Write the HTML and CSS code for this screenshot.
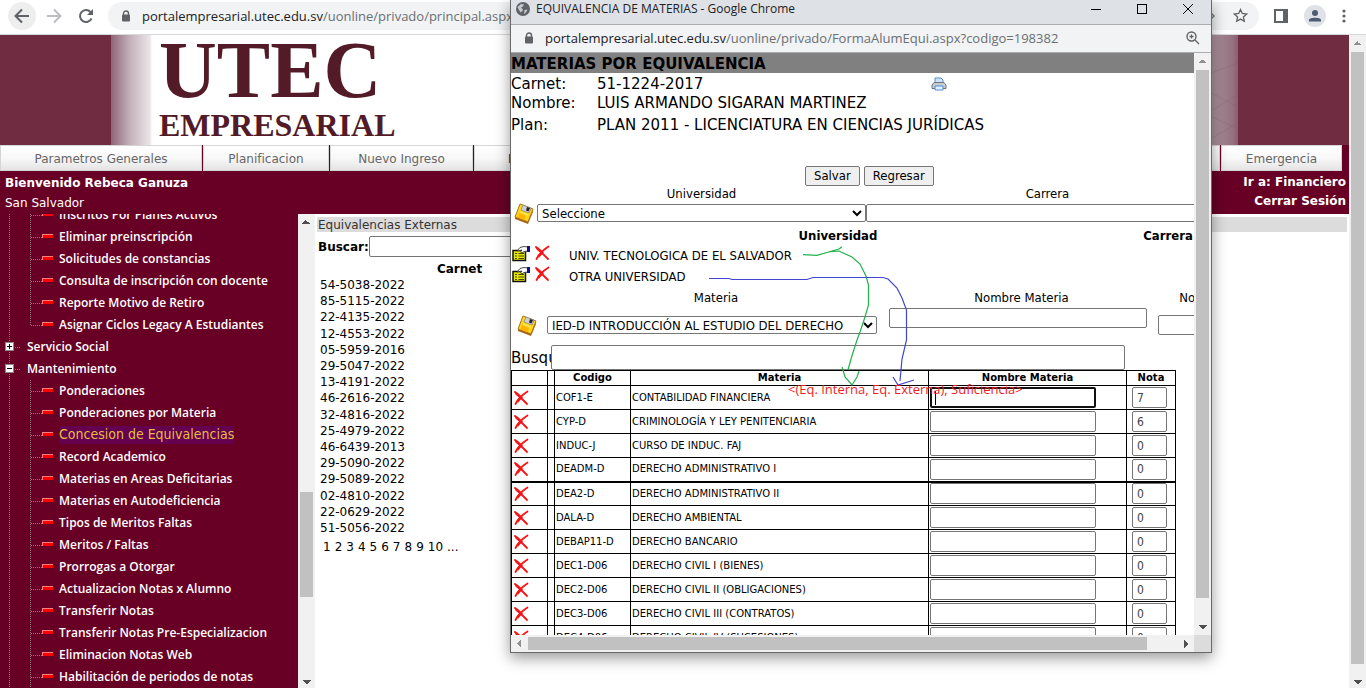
FILE: index.html
```html
<!DOCTYPE html>
<html lang="es">
<head>
<meta charset="utf-8">
<title>UTEC Empresarial</title>
<link rel="stylesheet" href="styles.css">
</head>
<body>
<svg class="defs" aria-hidden="true">
  <symbol id="disk" viewBox="0 0 20 21">
    <path d="M6 1 19 6 14 19 1 14Z" fill="#ffd51c" stroke="#a87510" stroke-width="1"/>
    <path d="M1 14 14 19 19 7V9L14 21 1 16Z" fill="#a8651a"/>
    <path d="M9 2 17 5 15 10 7 7Z" fill="#cfcfd6" stroke="#777" stroke-width=".6"/>
    <path d="M13 4 16 5 14.500 8.500 12 7.500Z" fill="#222"/>
    <path d="M5 10 12 13 10.500 17 3.500 14.500Z" fill="#ffb400"/>
    <path d="M6 9 14 12" stroke="#fff27a"/>
  </symbol>
  <symbol id="cross" viewBox="0 0 16 16">
    <path d="M2 2C5 5 9 9 14 14M14.500 1.500C9 5 5 9 2.500 14" fill="none" stroke="#f81414" stroke-width="1.800" stroke-linecap="round"/>
    <path d="M3 3 9 8.500M8 7.500 4 12" stroke="#f81414" stroke-width="2.600"/>
  </symbol>
  <symbol id="edit" viewBox="0 0 19 17">
    <path d="M1 5.500H13.500V15.500H1Z" fill="#e6e600" stroke="#111" stroke-width="1.500"/>
    <path d="M3 8.500H5M6.500 8.500H12M3 11H5M6.500 11H12M3 13.500H5M6.500 13.500H12" stroke="#444400"/>
    <path d="M5 6 8 2.500 12 1.500 16 2V6L12 6.500 10 8 8.500 7 10 5Z" fill="#fff" stroke="#333" stroke-width=".9"/>
    <path d="M15 1H18V7H15Z" fill="#10108a"/>
  </symbol>
  <symbol id="lock" viewBox="0 0 10 12">
    <path d="M2.500 5V3.500a2.500 2.500 0 0 1 5 0V5" fill="none" stroke="#5f6368" stroke-width="1.400"/>
    <rect x="1" y="4.500" width="8" height="7" rx="1" fill="#5f6368"/>
  </symbol>
</svg>

<header class="toolbar">
  <button class="nav-btn round" aria-label="Atrás"><svg width="16" height="16" viewBox="0 0 16 16"><path d="M15 8H2M8 1.500 1.500 8 8 14.500" fill="none" stroke="#5f6368" stroke-width="2"/></svg></button>
  <button class="nav-btn" aria-label="Adelante"><svg width="16" height="16" viewBox="0 0 16 16"><path d="M1 8H14M8 1.500 14.500 8 8 14.500" fill="none" stroke="#bcbec1" stroke-width="2"/></svg></button>
  <button class="nav-btn" aria-label="Recargar"><svg width="16" height="16" viewBox="0 0 16 16"><path d="M13.500 10.500A6 6 0 1 1 12.500 4L14 5.500" fill="none" stroke="#5f6368" stroke-width="2"/><path d="M15 1V7H9Z" fill="#5f6368"/></svg></button>
  <div class="omnibox">
    <svg width="10" height="12"><use href="#lock"/></svg>
    <span class="url"><b>portalempresarial.utec.edu.sv</b>/uonline/privado/principal.aspx</span>
    <svg width="14" height="14" viewBox="0 0 14 14"><path d="M1 2 6 7 1 12" fill="none" stroke="#777" stroke-width="1.400"/></svg>
    <svg width="15" height="15" viewBox="0 0 15 15"><path d="M7.500 1.500 9.300 5.500 13.700 6 10.400 9 11.300 13.300 7.500 11.100 3.700 13.300 4.600 9 1.300 6 5.700 5.500Z" fill="none" stroke="#5f6368" stroke-width="1.300"/></svg>
  </div>
  <div class="tools">
    <svg width="14" height="14" viewBox="0 0 14 14"><rect x="1" y="1" width="12" height="12" fill="none" stroke="#5f6368" stroke-width="2"/><path d="M9 0H14V14H9Z" fill="#5f6368"/></svg>
    <svg width="22" height="22" viewBox="0 0 22 22"><circle cx="11" cy="11" r="11" fill="#dee1e6"/><circle cx="11" cy="8" r="3" fill="#4d5b70"/><path d="M5 16.500V15C5 12 17 12 17 15V16.500Z" fill="#4d5b70"/></svg>
    <svg width="4" height="14" viewBox="0 0 4 14"><circle cx="2" cy="2" r="1.600" fill="#5f6368"/><circle cx="2" cy="7" r="1.600" fill="#5f6368"/><circle cx="2" cy="12" r="1.600" fill="#5f6368"/></svg>
  </div>
</header>

<div class="viewport">
  <div class="page">
    <div class="banner">
      <div class="block left"></div>
      <div class="fade-left"></div>
      <div class="logo"><span class="utec">UTEC</span><span class="emp">EMPRESARIAL</span></div>
      <svg class="fade-right" viewBox="0 0 98 110" preserveAspectRatio="none"><defs><linearGradient id="fr"><stop offset="0" stop-color="#fff"/><stop offset=".7" stop-color="#b09aa3"/><stop offset=".95" stop-color="#94707f"/><stop offset="1" stop-color="#8a5f70"/></linearGradient></defs><path d="M0 0H98V110H0Z" fill="url(#fr)"/><path d="M60 42 98 28M60 82 98 60M60 52 98 72M60 76 98 94M60 110 98 88" stroke="#7d5566" stroke-opacity=".2" fill="none"/></svg>
      <div class="block right"></div>
    </div>
    <nav class="tabs">
      <a class="w202" href="#">Parametros Generales</a>
      <a class="w126" href="#">Planificacion</a>
      <a class="w143" href="#">Nuevo Ingreso</a>
      <a class="wide" href="#">E</a>
      <a class="w121" href="#">Emergencia</a>
    </nav>
    <div class="userbar">
      <div><strong>Bienvenido Rebeca Ganuza</strong><span>San Salvador</span></div>
      <div class="right-col"><a href="#">Ir a: Financiero</a><a href="#">Cerrar Sesión</a></div>
    </div>
    <div class="columns">
      <nav class="side">
        <ul class="tree">
          <li class="leaf"><i class="v"></i><i class="h"></i><i class="dash"></i><a href="#">Inscritos Por Planes Activos</a></li>
          <li class="leaf"><i class="v"></i><i class="h"></i><i class="dash"></i><a href="#">Eliminar preinscripción</a></li>
          <li class="leaf"><i class="v"></i><i class="h"></i><i class="dash"></i><a href="#">Solicitudes de constancias</a></li>
          <li class="leaf"><i class="v"></i><i class="h"></i><i class="dash"></i><a href="#">Consulta de inscripción con docente</a></li>
          <li class="leaf"><i class="v"></i><i class="h"></i><i class="dash"></i><a href="#">Reporte Motivo de Retiro</a></li>
          <li class="leaf last"><i class="v"></i><i class="h"></i><i class="dash"></i><a href="#">Asignar Ciclos Legacy A Estudiantes</a></li>
          <li class="node"><i class="box plus"></i><i class="h"></i><a href="#">Servicio Social</a></li>
          <li class="node"><i class="box"></i><i class="h"></i><a href="#">Mantenimiento</a></li>
          <li class="leaf"><i class="v"></i><i class="h"></i><i class="dash"></i><a href="#">Ponderaciones</a></li>
          <li class="leaf"><i class="v"></i><i class="h"></i><i class="dash"></i><a href="#">Ponderaciones por Materia</a></li>
          <li class="leaf"><i class="v"></i><i class="h"></i><i class="dash"></i><a class="current" href="#">Concesion de Equivalencias</a></li>
          <li class="leaf"><i class="v"></i><i class="h"></i><i class="dash"></i><a href="#">Record Academico</a></li>
          <li class="leaf"><i class="v"></i><i class="h"></i><i class="dash"></i><a href="#">Materias en Areas Deficitarias</a></li>
          <li class="leaf"><i class="v"></i><i class="h"></i><i class="dash"></i><a href="#">Materias en Autodeficiencia</a></li>
          <li class="leaf"><i class="v"></i><i class="h"></i><i class="dash"></i><a href="#">Tipos de Meritos Faltas</a></li>
          <li class="leaf"><i class="v"></i><i class="h"></i><i class="dash"></i><a href="#">Meritos / Faltas</a></li>
          <li class="leaf"><i class="v"></i><i class="h"></i><i class="dash"></i><a href="#">Prorrogas a Otorgar</a></li>
          <li class="leaf"><i class="v"></i><i class="h"></i><i class="dash"></i><a href="#">Actualizacion Notas x Alumno</a></li>
          <li class="leaf"><i class="v"></i><i class="h"></i><i class="dash"></i><a href="#">Transferir Notas</a></li>
          <li class="leaf"><i class="v"></i><i class="h"></i><i class="dash"></i><a href="#">Transferir Notas Pre-Especializacion</a></li>
          <li class="leaf"><i class="v"></i><i class="h"></i><i class="dash"></i><a href="#">Eliminacion Notas Web</a></li>
          <li class="leaf"><i class="v"></i><i class="h"></i><i class="dash"></i><a href="#">Habilitación de periodos de notas</a></li>
        </ul>
      </nav>
      <div class="sbar side-bar"><i class="up"></i><i class="before"></i><i class="thumb"></i><i class="after"></i><i class="down"></i></div>
      <main class="content">
        <h2>Equivalencias Externas</h2>
        <div class="search"><label for="q">Buscar:</label><input id="q" type="text"></div>
        <table class="carnets">
          <thead><tr><th>Carnet</th></tr></thead>
          <tbody>
            <tr><td>54-5038-2022</td></tr><tr><td>85-5115-2022</td></tr><tr><td>22-4135-2022</td></tr><tr><td>12-4553-2022</td></tr>
            <tr><td>05-5959-2016</td></tr><tr><td>29-5047-2022</td></tr><tr><td>13-4191-2022</td></tr><tr><td>46-2616-2022</td></tr>
            <tr><td>32-4816-2022</td></tr><tr><td>25-4979-2022</td></tr><tr><td>46-6439-2013</td></tr><tr><td>29-5090-2022</td></tr>
            <tr><td>29-5089-2022</td></tr><tr><td>02-4810-2022</td></tr><tr><td>22-0629-2022</td></tr><tr><td>51-5056-2022</td></tr>
          </tbody>
        </table>
        <div class="pager"><span>1</span><a href="#">2</a><a href="#">3</a><a href="#">4</a><a href="#">5</a><a href="#">6</a><a href="#">7</a><a href="#">8</a><a href="#">9</a><a href="#">10</a><a href="#">...</a></div>
      </main>
    </div>
  </div>
  <div class="sbar page-bar"><i class="up dim"></i><i class="thumb"></i><i class="after"></i><i class="down"></i></div>
</div>

<section class="popup">
  <div class="titlebar">
    <svg width="14" height="14" viewBox="0 0 14 14"><circle cx="7" cy="7" r="7" fill="#5f6368"/><path d="M1.500 5 5 2 8 2.500 7 4.500 5 5.500 7 7.500 6.500 9 4.500 10.500 3 8ZM9.500 3.500 12 5.500M8.500 8 11.500 7.500 10 10.500 8 12Z" fill="#dee1e6" fill-opacity=".8"/></svg>
    <span>EQUIVALENCIA DE MATERIAS - Google Chrome</span>
    <div class="wincontrols">
      <button aria-label="Minimizar"><svg width="12" height="12"><path d="M1 6.500H11" stroke="#000"/></svg></button>
      <button aria-label="Maximizar"><svg width="12" height="12"><rect x="1.500" y="1.500" width="9" height="9" fill="none" stroke="#000"/></svg></button>
      <button aria-label="Cerrar"><svg width="12" height="12"><path d="M1 1 11 11M11 1 1 11" stroke="#000"/></svg></button>
    </div>
  </div>
  <div class="address">
    <svg width="10" height="12"><use href="#lock"/></svg>
    <span class="url"><b>portalempresarial.utec.edu.sv</b>/uonline/privado/FormaAlumEqui.aspx?codigo=198382</span>
    <svg width="14" height="14" viewBox="0 0 14 14"><circle cx="5.500" cy="5.500" r="4.500" fill="none" stroke="#5f6368" stroke-width="1.400"/><path d="M9 9 13 13M3.500 5.500H7.500M5.500 3.500V7.500" stroke="#5f6368" stroke-width="1.300"/></svg>
  </div>
  <div class="frame">
    <div class="doc">
      <h1>MATERIAS POR EQUIVALENCIA</h1>
      <div class="info">
        <span>Carnet:</span><span>51-1224-2017</span>
        <svg width="16" height="14" viewBox="0 0 16 14"><path d="M4 6V1H10L12 3V6" fill="#cfe4fb" stroke="#4f8fd0"/><path d="M1 8 3 5.500H13L15 8V11.500H1Z" fill="#c9ccd2" stroke="#6d7480"/><path d="M4 9H12V13H4Z" fill="#e4f0ff" stroke="#4f8fd0"/></svg>
        <span>Nombre:</span><span class="span2">LUIS ARMANDO SIGARAN MARTINEZ</span>
        <span>Plan:</span><span class="span2">PLAN 2011 - LICENCIATURA EN CIENCIAS JURÍDICAS</span>
      </div>
      <div class="actions"><button>Salvar</button><button>Regresar</button></div>
      <div class="uni-form">
        <span></span><label for="uni">Universidad</label><label for="car">Carrera</label>
        <svg width="20" height="21"><use href="#disk"/></svg>
        <select id="uni"><option>Seleccione</option></select>
        <select id="car"><option></option></select>
      </div>
      <table class="unis">
        <colgroup><col class="c-tools"><col class="c-uni"><col class="c-car"></colgroup>
        <thead><tr><th></th><th>Universidad</th><th>Carrera</th></tr></thead>
        <tbody>
          <tr><td><div class="icons"><svg width="19" height="17"><use href="#edit"/></svg><svg width="16" height="16"><use href="#cross"/></svg></div></td><td>UNIV. TECNOLOGICA DE EL SALVADOR</td><td></td></tr>
          <tr><td><div class="icons"><svg width="19" height="17"><use href="#edit"/></svg><svg width="16" height="16"><use href="#cross"/></svg></div></td><td>OTRA UNIVERSIDAD</td><td></td></tr>
        </tbody>
      </table>
      <div class="mat-form">
        <span></span><label for="mat">Materia</label><label for="nom">Nombre Materia</label><label for="not">Nota</label>
        <svg width="20" height="21"><use href="#disk"/></svg>
        <select id="mat"><option>IED-D INTRODUCCIÓN AL ESTUDIO DEL DERECHO</option></select>
        <input class="nom" id="nom" type="text">
        <input class="not" id="not" type="text">
      </div>
      <div class="find"><label for="busq">Busqueda</label><input id="busq" type="text"></div>
      <table class="grades">
        <colgroup><col class="g1"><col class="g2"><col class="g3"><col class="g4"><col class="g5"><col class="g6"></colgroup>
        <thead><tr><th></th><th></th><th>Codigo</th><th>Materia</th><th>Nombre Materia</th><th>Nota</th></tr></thead>
        <tbody>
          <tr><td><svg width="16" height="16"><use href="#cross"/></svg></td><td></td><td>COF1-E</td><td>CONTABILIDAD FINANCIERA</td><td><input class="name focus" aria-label="Nombre" type="text"></td><td><input class="grade" aria-label="Nota" value="7"></td></tr>
          <tr><td><svg width="16" height="16"><use href="#cross"/></svg></td><td></td><td>CYP-D</td><td>CRIMINOLOGÍA Y LEY PENITENCIARIA</td><td><input class="name" aria-label="Nombre" type="text"></td><td><input class="grade" aria-label="Nota" value="6"></td></tr>
          <tr><td><svg width="16" height="16"><use href="#cross"/></svg></td><td></td><td>INDUC-J</td><td>CURSO DE INDUC. FAJ</td><td><input class="name" aria-label="Nombre" type="text"></td><td><input class="grade" aria-label="Nota" value="0"></td></tr>
          <tr class="heavy"><td><svg width="16" height="16"><use href="#cross"/></svg></td><td></td><td>DEADM-D</td><td>DERECHO ADMINISTRATIVO I</td><td><input class="name" aria-label="Nombre" type="text"></td><td><input class="grade" aria-label="Nota" value="0"></td></tr>
          <tr><td><svg width="16" height="16"><use href="#cross"/></svg></td><td></td><td>DEA2-D</td><td>DERECHO ADMINISTRATIVO II</td><td><input class="name" aria-label="Nombre" type="text"></td><td><input class="grade" aria-label="Nota" value="0"></td></tr>
          <tr><td><svg width="16" height="16"><use href="#cross"/></svg></td><td></td><td>DALA-D</td><td>DERECHO AMBIENTAL</td><td><input class="name" aria-label="Nombre" type="text"></td><td><input class="grade" aria-label="Nota" value="0"></td></tr>
          <tr><td><svg width="16" height="16"><use href="#cross"/></svg></td><td></td><td>DEBAP11-D</td><td>DERECHO BANCARIO</td><td><input class="name" aria-label="Nombre" type="text"></td><td><input class="grade" aria-label="Nota" value="0"></td></tr>
          <tr><td><svg width="16" height="16"><use href="#cross"/></svg></td><td></td><td>DEC1-D06</td><td>DERECHO CIVIL I (BIENES)</td><td><input class="name" aria-label="Nombre" type="text"></td><td><input class="grade" aria-label="Nota" value="0"></td></tr>
          <tr><td><svg width="16" height="16"><use href="#cross"/></svg></td><td></td><td>DEC2-D06</td><td>DERECHO CIVIL II (OBLIGACIONES)</td><td><input class="name" aria-label="Nombre" type="text"></td><td><input class="grade" aria-label="Nota" value="0"></td></tr>
          <tr><td><svg width="16" height="16"><use href="#cross"/></svg></td><td></td><td>DEC3-D06</td><td>DERECHO CIVIL III (CONTRATOS)</td><td><input class="name" aria-label="Nombre" type="text"></td><td><input class="grade" aria-label="Nota" value="0"></td></tr>
          <tr><td><svg width="16" height="16"><use href="#cross"/></svg></td><td></td><td>DEC4-D06</td><td>DERECHO CIVIL IV (SUCESIONES)</td><td><input class="name" aria-label="Nombre" type="text"></td><td><input class="grade" aria-label="Nota" value="0"></td></tr>
        </tbody>
      </table>
    </div>
    <div class="sbar pop-bar"><i class="up dim"></i><i class="thumb"></i><i class="after"></i><i class="down"></i></div>
    <div class="hbar"><i class="prev"></i><i class="thumb"></i><i class="after"></i><i class="next"></i></div>
    <div class="corner"></div>
  </div>
  <svg class="ink" width="699" height="652" viewBox="511 0 699 652" aria-hidden="true">
    <g fill="none" stroke="#22b14c" stroke-width="1.200">
      <path d="M803 254.700 817 255.300 832 251 839 249 842 246.700M828 252 839 251 852 257 860 264 866 276 868.500 285V305L865 317 860 332 857 340 851 359 848 370M842 367 845 377 852 385 857 377 859 371"/>
    </g>
    <g fill="none" stroke="#3f48cc" stroke-width="1.200">
      <path d="M709 278.500H729L732 279.500H807L813 277.500H883L888 279 897 288 902 298 906.500 310V340L902 359 900 381M893 377 898 385 914 380"/>
    </g>
  </svg>
  <span class="note">&lt;(Eq. Interna, Eq. Externa), Suficiencia&gt;</span>
</section>
</body>
</html>
```
FILE: styles.css
```css
* { box-sizing: border-box; }
html, body { height: 100%; }
body { margin: 0; display: flex; flex-direction: column; overflow: hidden; position: relative; background: #fff; color: #000; font: 12px/16px "DejaVu Sans", sans-serif; }
a { color: inherit; text-decoration: none; }
button, input, select { font: inherit; color: inherit; margin: 0; }
svg { display: block; flex: none; }
.defs { position: absolute; width: 0; height: 0; }
input, select { border: 1px solid #767676; border-radius: 2px; background-color: #fff; }

/* browser toolbar */
.toolbar { flex: none; height: 35px; display: flex; align-items: center; padding: 0 20px 3px 8px; border-bottom: 1px solid #d6d8da; }
.nav-btn { width: 28px; height: 28px; margin-right: 4px; padding: 0; border: 0; border-radius: 14px; background: none; display: grid; place-items: center; }
.nav-btn.round { background: #eee; }
.omnibox { flex: 1; height: 28px; margin-left: 4px; padding: 0 11px 0 13px; display: flex; align-items: center; gap: 11px; border-radius: 14px; background: #f1f3f4; }
.url { flex: 1; font: 13px/20px "Open Sans", sans-serif; color: #6b6f73; white-space: nowrap; overflow: hidden; }
.url b { font-weight: 400; color: #202124; }
.tools { display: flex; align-items: center; gap: 16px; padding-left: 15px; }

/* page */
.viewport { flex: 1; min-height: 0; display: flex; }
.page { flex: 1; min-width: 0; display: flex; flex-direction: column; }
.banner { flex: none; height: 110px; display: flex; }
.block { background: #702c40; width: 111px; }
.fade-left { width: 41px; background: linear-gradient(90deg, #8e6476, #c2b0b9 45%, #ebe5e8 95%, #fff); }
.logo { flex: 1; padding: 0 0 0 7px; display: flex; flex-direction: column; color: #521b27; font-family: "Liberation Serif", serif; font-weight: 700; }
.utec { font-size: 80px; line-height: 70px; }
.emp { font-size: 32px; line-height: 40px; }
.fade-right { width: 98px; height: 110px; }
.tabs { flex: none; height: 26px; padding-right: 7px; display: flex; gap: 1px; background: #680025; }
.tabs a { display: flex; align-items: center; justify-content: center; padding-top: 2px; border: 1px solid #d5d5d5; background: linear-gradient(#fff, #f8f8f8 50%, #e4e4e4); color: #666; }
.w202 { width: 202px; }
.w126 { width: 126px; }
.w143 { width: 143px; }
.w121 { width: 121px; }
.tabs .wide { flex: 1; justify-content: flex-start; padding-left: 33px; color: #5a0a4a; }
.userbar { flex: none; height: 43px; padding: 2px 3px 0 5px; display: flex; justify-content: space-between; background: #680025; color: #fff; line-height: 20px; }
.userbar div { display: flex; flex-direction: column; }
.userbar .right-col { align-items: flex-end; font-weight: 700; line-height: 19px; }
.columns { flex: 1; min-height: 0; display: flex; }

/* menu tree */
.side { width: 298px; overflow: hidden; background: #680025; color: #fff; font: 600 12px/22px "Open Sans", sans-serif; }
.tree { list-style: none; margin: -10px 0 0; padding: 0; background: linear-gradient(#94707f 50%, transparent 50%) 9px 0 / 1px 2px repeat-y; }
.tree li { height: 22px; display: flex; align-items: center; white-space: nowrap; }
.leaf { padding-left: 30px; }
.v { width: 1px; align-self: stretch; background: linear-gradient(#94707f 50%, transparent 50%) 0 0 / 1px 2px repeat-y; }
.last .v { align-self: flex-start; height: 11px; }
.h { height: 1px; width: 11px; background: linear-gradient(90deg, #94707f 50%, transparent 50%) 0 0 / 2px 1px repeat-x; }
.dash { width: 11px; height: 4px; margin: 0 6px 2px 0; background: #f00; border: solid #ff7d7d; border-width: 1px 0 0 1px; }
.node { padding-left: 5px; }
.node .h { width: 6px; margin: 0 6px 0 1px; }
.box { width: 9px; height: 9px; margin-bottom: 2px; border: 1px solid #888; background: linear-gradient(#000, #000) center / 5px 1px no-repeat, #fff; }
.box.plus { background: linear-gradient(#000, #000) center / 5px 1px no-repeat, linear-gradient(#000, #000) center / 1px 5px no-repeat, #fff; }
.current { padding-bottom: 1px; background: #650050; color: #e6be3c; font: 14px/17px "DejaVu Sans Condensed", "DejaVu Sans", sans-serif; }

/* scrollbars */
.sbar { flex: none; width: 17px; padding: 0 2px; display: flex; flex-direction: column; background: #f1f1f1; }
.thumb { background: #c1c1c1; }
.up, .down { flex: none; height: 17px; background: conic-gradient(from -45deg at 50% 100%, #505050 90deg, transparent 0) center / 8px 4px no-repeat; }
.up { transform: rotate(180deg); }
.dim { opacity: .6; }
.side-bar .before { flex: 260; }
.side-bar .thumb { flex: 104; }
.side-bar .after { flex: 79; }
.side-bar .down, .page-bar .down { height: 12px; }
.page-bar .thumb { flex: 612; }
.page-bar .after { flex: 12; }
.pop-bar .thumb { flex: 528; }
.pop-bar .after { flex: 20; }
.hbar { padding: 2px 0; display: flex; background: #f1f1f1; }
.hbar .thumb { flex: 619; }
.hbar .after { flex: 30; }
.prev, .next { width: 17px; background: conic-gradient(from 225deg at 100% 50%, #505050 90deg, transparent 0) center / 4px 8px no-repeat; }
.prev { opacity: .6; transform: rotate(180deg); }
.corner { background: #dcdcdc; }

/* listing */
.content { flex: 1; min-width: 0; padding: 3px 2px 0; }
.content h2 { margin: 0; height: 15px; padding-left: 1px; background: #dcdcdc; font: 12px/16px "DejaVu Sans", sans-serif; color: #333; }
.search { display: flex; align-items: center; margin-top: 4px; padding-left: 1px; font-weight: 700; }
.search input { width: 220px; height: 21px; }
.carnets { width: 285px; height: 275px; margin-top: 4px; border-collapse: collapse; }
.carnets td, .carnets th { padding: 0 3px; line-height: 16px; }
.pager { display: flex; gap: 4px; padding: 3px 6px; }

/* popup window */
.popup { position: absolute; left: 510px; top: 0; width: 702px; height: 653px; display: flex; flex-direction: column; background: #fff; border: solid #696969; border-width: 0 1px 1px; box-shadow: 0 5px 14px rgba(0, 0, 0, .4); }
.titlebar { flex: none; height: 25px; padding: 0 17px 7px 5px; display: flex; align-items: center; gap: 6px; background: #dee1e6; border-bottom: 1px solid #a9acb0; font: 12px/16px "Open Sans", sans-serif; color: #202124; }
.wincontrols { margin-left: auto; display: flex; gap: 34px; }
.wincontrols button { border: 0; padding: 0; background: none; }
.address { flex: none; height: 28px; padding: 0 11px 2px 13px; display: flex; align-items: center; gap: 11px; background: #f1f3f4; border-bottom: 1px solid #a9acb0; }
.frame { flex: 1; min-height: 0; display: grid; grid-template-columns: 1fr 17px; grid-template-rows: 1fr 17px; }
.doc { overflow: hidden; white-space: nowrap; }
.doc h1 { margin: 0; height: 20px; background: #808080; font: 700 15px/22px "DejaVu Sans", sans-serif; }
.info { display: grid; grid-template-columns: 86px 334px auto; grid-template-rows: 21px 18px 25px; align-items: center; justify-content: start; font-size: 15px; }
.span2 { grid-column: span 2; }
.actions { margin-top: 29px; padding-left: 294px; display: flex; gap: 4px; }
.actions button { height: 20px; padding: 0 8px; border: 1px solid #767676; border-radius: 2px; background: #efefef; font: 13px/16px "DejaVu Sans Condensed", "DejaVu Sans", sans-serif; }
.uni-form, .unis, .mat-form { font: 13px/15px "DejaVu Sans Condensed", "DejaVu Sans", sans-serif; }
.uni-form { width: 718px; display: grid; grid-template-columns: 26px 329px 363px; grid-template-rows: 15px 24px; align-items: center; }
.uni-form label, .mat-form label { text-align: center; }
.uni-form svg { margin-left: 3px; }
.doc select { height: 18px; padding: 0; }
.unis { width: 718px; table-layout: fixed; border-collapse: collapse; }
.unis th { padding: 0; height: 20px; }
.unis td { padding: 0; height: 21px; }
.c-tools { width: 58px; }
.c-uni { width: 538px; }
.icons { display: flex; gap: 3px; padding: 0 0 4px 1px; }
.mat-form { width: 717px; display: grid; grid-template-columns: 36px 338px 273px 70px; grid-template-rows: 20px 36px; align-items: center; }
.mat-form svg { margin-left: 6px; }
.mat-form select { width: 330px; }
.nom { align-self: start; width: 258px; height: 20px; margin: 1px 0 0 4px; }
.not { width: 66px; height: 20px; }
.find { display: flex; align-items: center; height: 27px; padding-top: 2px; }
.find label { width: 40px; overflow: hidden; font-size: 15px; line-height: 24px; }
.find input { width: 574px; height: 25px; }
.grades { width: 665px; table-layout: fixed; border-collapse: collapse; font-size: 10px; line-height: 12px; }
.grades th, .grades td { border: 1px solid #000; padding: 0 1px; }
.grades th { height: 15px; }
.grades td { height: 24px; }
.grades .heavy td { border-bottom-width: 2px; }
.g1 { width: 36px; }
.g2 { width: 7px; }
.g3 { width: 76px; }
.g4 { width: 298px; }
.g5 { width: 198px; }
.name, .grade { display: block; height: 21px; font: 12px/16px "DejaVu Sans Condensed", "DejaVu Sans", sans-serif; }
.name { width: 166px; }
.name.focus { border: 2px solid #101010; background: linear-gradient(#000, #000) 3px 2px / 1px 14px no-repeat, #fff; }
.grade { width: 35px; margin-left: 4px; padding: 0 4px; color: #444; }
.ink { position: absolute; left: 0; top: 0; pointer-events: none; }
.note { position: absolute; left: 277px; top: 381px; color: #ed1c24; font: 13px/16px "Open Sans", sans-serif; white-space: nowrap; }
```
